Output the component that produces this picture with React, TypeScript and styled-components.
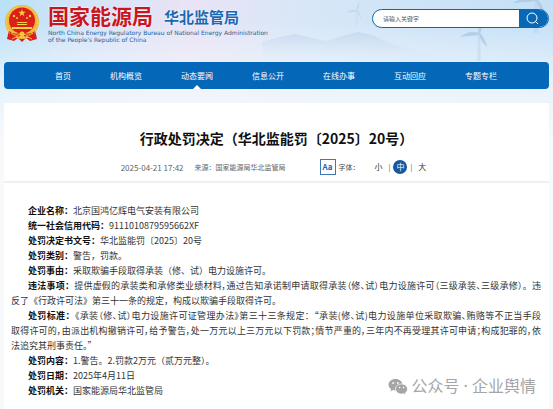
import React from "react";
import styled, { createGlobalStyle } from "styled-components";

const GlobalStyle = createGlobalStyle`
  * { box-sizing: border-box; }
  body {
    margin: 0;
    background: #f8f9fb;
    color: #333;
    font-family: "Noto Sans CJK SC", "Noto Sans", sans-serif;
    font-size: 9px;
  }
`;

const Page = styled.div`
  position: relative;
  min-height: 100vh;
  display: flex;
  flex-direction: column;
  padding: 0 4px;
  overflow: hidden;
`;

const Scenery = styled.svg`
  position: absolute;
  top: 0;
  left: 0;
  width: 100%;
  height: 140px;
  z-index: -1;
`;

const Header = styled.header`
  display: flex;
  justify-content: space-between;
  align-items: flex-start;
  height: 62px;
`;

const Brand = styled.div`
  display: flex;
  gap: 8px;
  padding-top: 4px;
`;

const Emblem = styled.svg`
  width: 36px;
  height: 39px;
`;

const Names = styled.div`
  display: flex;
  align-items: center;
  gap: 11px;
  height: 25px;
`;

const Agency = styled.span`
  color: #c9151e;
  font-family: "Liberation Sans", "Noto Sans CJK SC", sans-serif;
  font-size: 21px;
  font-weight: 700;
  line-height: 24px;
  text-shadow: 0 0 2px #fff, 0 0 1px #fff;
`;

const Bureau = styled.span`
  color: #1769b3;
  font-size: 15px;
  font-weight: 700;
  line-height: 24px;
  text-shadow: 0 0 2px #fff;
`;

const EnglishName = styled.p`
  margin: 0;
  color: #285c93;
  font-family: "DejaVu Sans", sans-serif;
  font-size: 6px;
  line-height: 7px;
`;

const Search = styled.form`
  display: flex;
  flex: 0 0 177px;
  height: 19px;
  margin-top: 9px;
  border: 1px solid #0768b8;
  border-radius: 10px;
  background: #fff;
  overflow: hidden;
`;

const SearchInput = styled.input`
  flex: 1;
  min-width: 0;
  padding: 0 10px;
  border: 0;
  outline: 0;
  background: transparent;
  font: 6px "Noto Sans CJK SC", sans-serif;
  &::placeholder { color: #555; opacity: 1; }
`;

const SearchButton = styled.button`
  display: flex;
  align-items: center;
  justify-content: center;
  width: 29px;
  padding: 0 3px 0 0;
  border: 0;
  background: #0768b8;
`;

const Nav = styled.nav`
  display: flex;
  gap: 39px;
  height: 27px;
  padding-left: 51px;
  border-radius: 4px;
  background: #0567b8;
`;

const NavLink = styled.a<{ $active?: boolean }>`
  position: relative;
  color: #fff;
  font-size: 8px;
  line-height: 28px;
  text-decoration: none;
  white-space: nowrap;
  &::after {
    content: "";
    display: ${(p) => (p.$active ? "block" : "none")};
    position: absolute;
    left: 50%;
    bottom: 0;
    margin-left: -4px;
    border: 4px solid transparent;
    border-top: 0;
    border-bottom-color: #fff;
  }
`;

const Panel = styled.main`
  flex: 1;
  margin-top: 14px;
  background: #fff;
`;

const Title = styled.h1`
  margin: 0;
  padding-top: 24px;
  color: #111;
  font-size: 14px;
  font-weight: 700;
  line-height: 22px;
  text-align: center;
`;

const Meta = styled.div`
  display: flex;
  align-items: center;
  justify-content: center;
  height: 34px;
  padding-top: 4px;
  border-bottom: 2px solid #f0f0f0;
  color: #666;
  font-size: 7px;
`;

const PublishTime = styled.time`
  margin-right: 11px;
  font-size: 8px;
`;

const Source = styled.span`
  margin-right: 34px;
`;

const SizePicker = styled.div`
  display: flex;
  align-items: center;
  color: #444;
`;

const SampleBox = styled.span`
  width: 16px;
  height: 16px;
  margin-right: 3px;
  border: 1px solid #3f78ba;
  color: #2a66ad;
  font-size: 8px;
  font-weight: 700;
  line-height: 14px;
  text-align: center;
`;

const SizeLabel = styled.span`
  margin-right: 9px;
`;

const SizeButton = styled.button<{ $on?: boolean }>`
  width: 14px;
  height: 14px;
  margin: 0 3px;
  padding: 0;
  border: 0;
  border-radius: 50%;
  background: ${(p) => (p.$on ? "#15589f" : "transparent")};
  color: ${(p) => (p.$on ? "#fff" : "#333")};
  font: 8px/14px "Noto Sans CJK SC", sans-serif;
`;

const Article = styled.article`
  padding: 20px 8px 5px 7px;
`;

const Clause = styled.p`
  margin: 0;
  padding-left: 17px;
  line-height: 15px;
`;

const Line = styled.span<{ $first?: boolean }>`
  display: block;
  margin-left: ${(p) => (p.$first ? "0" : "-17px")};
  font-feature-settings: "palt";
  text-align: justify;
  text-align-last: justify;
`;

const LastLine = styled.span`
  display: block;
  margin-left: -17px;
`;

const FullWidth = styled.span`
  font-feature-settings: normal;
`;

const Term = styled.strong`
  color: #111;
  font-weight: 700;
  font-feature-settings: normal;
`;

const Watermark = styled.div`
  position: absolute;
  right: 17px;
  bottom: 12px;
  display: flex;
  align-items: center;
  gap: 3px;
  color: #a5a5a5;
  font-family: "Noto Sans", "Noto Sans CJK SC", sans-serif;
  font-size: 16px;
  line-height: 22px;
`;

const navItems = ["首页", "机构概览", "动态要闻", "信息公开", "在线办事", "互动回应", "专题专栏"];

const Turbine = ({ x, y, s }: { x: number; y: number; s: number }) => (
  <g transform={`translate(${x} ${y}) scale(${s})`} fill="#a9c6e2">
    <path d="M-1 0h2l1 30h-4z" opacity=".4" />
    <path d="M0-1C-8-4-16-1-21 3-13 2-5 2 0 1z" />
    <path d="M-1 0C-1-8 2-14 5-18 5-12 3-5 1 0z" />
    <path d="M0 1C2 7 5 11 9 14 7 8 5 3 1-1z" />
  </g>
);

const star = "M0-4 .9-1.2H3.8L1.5.5 2.4 3.2 0 1.5-2.4 3.2-1.5.5-3.8-1.2H-.9z";

export default function App() {
  return (
    <Page>
      <GlobalStyle />
      <Scenery viewBox="0 0 553 140" preserveAspectRatio="none" aria-hidden="true">
        <defs>
          <linearGradient id="sky" x1="0" x2="1">
            <stop offset="0" stopColor="#b9e1f7" />
            <stop offset=".16" stopColor="#d5e4f8" />
            <stop offset=".34" stopColor="#e9e3f5" />
            <stop offset=".55" stopColor="#d7e7f8" />
            <stop offset="1" stopColor="#c4e0f7" />
          </linearGradient>
          <linearGradient id="fade" x1="0" x2="0" y1="0" y2="1">
            <stop offset=".15" stopColor="#f8f9fb" stopOpacity="0" />
            <stop offset=".6" stopColor="#f3f8fd" stopOpacity=".75" />
            <stop offset="1" stopColor="#f8f9fb" />
          </linearGradient>
          <linearGradient id="hill" x1="0" x2="0" y1="0" y2="1">
            <stop offset="0" stopColor="#bdd2ea" />
            <stop offset="1" stopColor="#dceaf8" stopOpacity="0" />
          </linearGradient>
        </defs>
        <path d="M0 0h553v140H0z" fill="url(#sky)" />
        <path d="M0 0h553v140H0z" fill="url(#fade)" />
        <path d="M262 42 280 37 295 34 308 37 326 41 342 36 358 32 372 35 395 45 430 54 430 62H262z" fill="url(#hill)" opacity=".65" />
        <g opacity=".4"><Turbine x={357} y={11} s={0.5} /></g>
        <g opacity=".7"><Turbine x={479} y={34} s={0.9} /></g>
        <g opacity=".7"><Turbine x={536} y={0} s={1.1} /></g>
      </Scenery>

      <Header>
        <Brand>
          <Emblem viewBox="0 0 36 39" role="img" aria-label="国徽">
            <path d="M5 26 3 35l7 2 4-3 4 4 4-4 4 3 7-2-2-9z" fill="#d8201b" />
            <circle cx="18" cy="18" r="17" fill="#edb83c" />
            <circle cx="18" cy="18" r="15.500" fill="none" stroke="#f7d66a" strokeWidth="1" strokeDasharray="2 1" />
            <circle cx="18" cy="16.500" r="13" fill="#dc2019" />
            <g fill="#f8cf45">
              <path d={star} transform="translate(18 9)" />
              <circle cx="10" cy="12" r="1.200" />
              <circle cx="26" cy="12" r="1.200" />
              <circle cx="13" cy="14" r="1" />
              <circle cx="23" cy="14" r="1" />
              <path d="M14 18h8l2 1H12zM13 20h10v1H13zM8 23h20v2H8z" />
            </g>
            <path d="M5 27q6 5 13 1 7 4 13-1l-2 6q-6 1-11-2-5 3-11 2z" fill="#d8201b" />
            <path d="M7 29q5 4 9 1M29 29q-5 4-9 1M8 35l6-3M28 35l-6-3" fill="none" stroke="#f5c640" strokeWidth="1" />
            <circle cx="18" cy="30" r="2.500" fill="#f6c73d" />
          </Emblem>
          <div>
            <Names>
              <Agency>国家能源局</Agency>
              <Bureau>华北监管局</Bureau>
            </Names>
            <EnglishName>
              North China Energy Regulatory Bureau of National Energy Administration
              <br />
              of the People's Republic of China
            </EnglishName>
          </div>
        </Brand>
        <Search onSubmit={(e) => e.preventDefault()}>
          <SearchInput type="text" aria-label="搜索" placeholder="请输入关键字" />
          <SearchButton type="submit" aria-label="搜索">
            <svg width="13" height="13" viewBox="0 0 13 13" fill="none" stroke="#fff" strokeWidth="1">
              <circle cx="6" cy="6" r="5" />
              <path d="m9 9 3 3" />
            </svg>
          </SearchButton>
        </Search>
      </Header>

      <Nav>
        {navItems.map((item) => (
          <NavLink key={item} href="#" $active={item === "动态要闻"}>{item}</NavLink>
        ))}
      </Nav>

      <Panel>
        <Title>行政处罚决定（华北监能罚〔2025〕20号）</Title>
        <Meta>
          <PublishTime>2025-04-21 17:42</PublishTime>
          <Source>来源：国家能源局华北监管局</Source>
          <SizePicker>
            <SampleBox>Aa</SampleBox>
            <SizeLabel>字体：</SizeLabel>
            <SizeButton type="button">小</SizeButton>|
            <SizeButton type="button" $on>中</SizeButton>|
            <SizeButton type="button">大</SizeButton>
          </SizePicker>
        </Meta>
        <Article>
          <Clause><Term>企业名称：</Term>北京国鸿亿辉电气安装有限公司</Clause>
          <Clause><Term>统一社会信用代码：</Term>9111010879595662XF</Clause>
          <Clause><Term>处罚决定书文号：</Term>华北监能罚〔2025〕20号</Clause>
          <Clause><Term>处罚类别：</Term>警告，罚款。</Clause>
          <Clause><Term>处罚事由：</Term>采取欺骗手段取得承装（修、试）电力设施许可。</Clause>
          <Clause>
            <Line $first><Term>违法事项：</Term>提供虚假的承装类和承修类业绩材料，通过告知承诺制申请取得承装（修、试）电力设施许可（三级承装、三级承修）<FullWidth>。</FullWidth>违</Line>
            <LastLine>反了《行政许可法》第三十一条的规定，构成以欺骗手段取得许可。</LastLine>
          </Clause>
          <Clause>
            <Line $first><Term>处罚标准：</Term>《承装（修、试）电力设施许可证管理办法》第三十三条规定<FullWidth>：“</FullWidth>承装(修、试)电力设施单位采取欺骗、贿赂等不正当手段</Line>
            <Line>取得许可的，由派出机构撤销许可，给予警告，处一万元以上三万元以下罚款；情节严重的，三年内不再受理其许可申请；构成犯罪的，依</Line>
            <LastLine>法追究其刑事责任。”</LastLine>
          </Clause>
          <Clause><Term>处罚内容：</Term>1.警告。2.罚款2万元（贰万元整）。</Clause>
          <Clause><Term>处罚日期：</Term>2025年4月11日</Clause>
          <Clause><Term>处罚机关：</Term>国家能源局华北监管局</Clause>
        </Article>
      </Panel>

      <Watermark>
        <svg width="20" height="17" viewBox="0 0 20 17" aria-hidden="true">
          <path d="M7.500 1C3.500 1 .5 3.500.5 6.700c0 1.900 1 3.400 2.600 4.500L2.500 13.500 5 12.100c.8.200 1.600.3 2.500.3 4 0 7-2.500 7-5.700S11.500 1 7.500 1z" fill="#a5a5a5" />
          <path d="M13.500 6c-3.400 0-6 2.200-6 5s2.600 5 6 5c.8 0 1.500-.1 2.200-.3l2.100 1.100-.5-1.900c1.400-.9 2.200-2.300 2.200-3.900 0-2.800-2.600-5-6-5z" fill="#a5a5a5" stroke="#fff" strokeWidth=".7" />
          <g fill="#fff">
            <circle cx="5.200" cy="5" r=".9" />
            <circle cx="9.800" cy="5" r=".9" />
            <circle cx="11.600" cy="9.500" r=".8" />
            <circle cx="15.500" cy="9.500" r=".8" />
          </g>
        </svg>
        <span>公众号 · 企业舆情</span>
      </Watermark>
    </Page>
  );
}
